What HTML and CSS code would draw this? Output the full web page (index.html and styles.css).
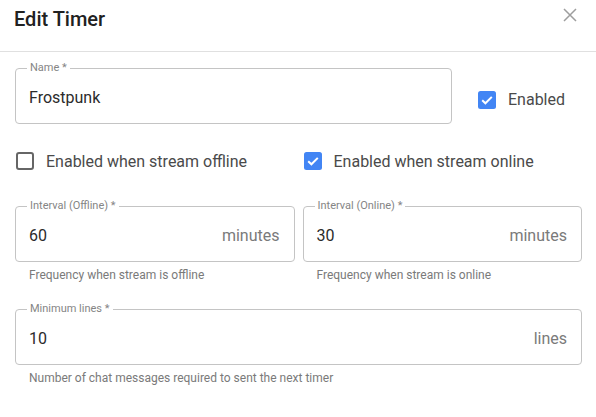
FILE: index.html
```html
<!DOCTYPE html>
<html lang="en">
<head>
<meta charset="utf-8">
<title>Edit Timer</title>
<link rel="stylesheet" href="styles.css">
</head>
<body>
<div class="dialog">
  <header class="dialog-header">
    <h2 class="dialog-title">Edit Timer</h2>
    <button class="close-btn" aria-label="Close">
      <svg width="14" height="14" viewBox="0 0 14 14"><path d="M1 1L13 13M13 1L1 13" stroke="#9e9e9e" stroke-width="1.5" fill="none"/></svg>
    </button>
  </header>
  <div class="dialog-content">
    <div class="name-row">
      <fieldset class="field">
        <legend>Name *</legend>
        <div class="field-body"><span class="value">Frostpunk</span></div>
      </fieldset>
      <label class="check">
        <span class="box">
          <svg width="18" height="18" viewBox="0 0 18 18"><rect x="0" y="0" width="18" height="18" rx="2.5" fill="#4285f4"/><path d="M4.2 9.2L7.4 12.3L13.8 5.9" stroke="#fff" stroke-width="2" fill="none"/></svg>
        </span>
        <span class="check-text">Enabled</span>
      </label>
    </div>

    <div class="two-col check-row">
      <label class="check">
        <span class="box">
          <svg width="18" height="18" viewBox="0 0 18 18"><rect x="1" y="1" width="16" height="16" rx="2" fill="none" stroke="#666" stroke-width="2"/></svg>
        </span>
        <span class="check-text">Enabled when stream offline</span>
      </label>
      <label class="check">
        <span class="box">
          <svg width="18" height="18" viewBox="0 0 18 18"><rect x="0" y="0" width="18" height="18" rx="2.5" fill="#4285f4"/><path d="M4.2 9.2L7.4 12.3L13.8 5.9" stroke="#fff" stroke-width="2" fill="none"/></svg>
        </span>
        <span class="check-text">Enabled when stream online</span>
      </label>
    </div>

    <div class="two-col">
      <div class="control">
        <fieldset class="field">
          <legend>Interval (Offline) *</legend>
          <div class="field-body"><span class="value">60</span><span class="unit">minutes</span></div>
        </fieldset>
        <p class="helper">Frequency when stream is offline</p>
      </div>
      <div class="control">
        <fieldset class="field">
          <legend>Interval (Online) *</legend>
          <div class="field-body"><span class="value">30</span><span class="unit">minutes</span></div>
        </fieldset>
        <p class="helper">Frequency when stream is online</p>
      </div>
    </div>

    <div class="control min-lines">
      <fieldset class="field">
        <legend>Minimum lines *</legend>
        <div class="field-body"><span class="value">10</span><span class="unit">lines</span></div>
      </fieldset>
      <p class="helper">Number of chat messages required to sent the next timer</p>
    </div>
  </div>
</div>
</body>
</html>
```

FILE: styles.css
```css
* { box-sizing: border-box; }

html, body {
  margin: 0;
  padding: 0;
  background: #ffffff;
}

body {
  font-family: Roboto, "Liberation Sans", Arial, sans-serif;
  color: #212121;
}

.dialog {
  width: 596px;
}

.dialog-header {
  display: flex;
  justify-content: space-between;
  align-items: flex-start;
  padding: 7px 19px 20px 14px;
  border-bottom: 1px solid #e0e0e0;
}

.dialog-title {
  margin: 0;
  font-size: 20px;
  line-height: 24px;
  font-weight: 500;
  color: #212121;
}

.close-btn {
  margin: 1px 0 0 0;
  padding: 0;
  border: 0;
  background: none;
  width: 14px;
  height: 14px;
  display: block;
}
.close-btn svg { display: block; }

.dialog-content {
  padding: 10px 14px 0 15px;
}

.field {
  margin: 0;
  padding: 0 14px 3px 13px;
  border: 1px solid #c4c4c4;
  border-radius: 4px;
  min-width: 0;
}

.field legend {
  font-size: 11px;
  line-height: 12px;
  color: #858585;
  padding: 0 3px;
  margin-left: -2px;
}

.field-body {
  height: 46px;
  display: flex;
  align-items: center;
  justify-content: space-between;
  font-size: 16px;
}

.value { color: #2b2b2b; }
.unit { color: #7a7a7a; }

.name-row {
  display: grid;
  grid-template-columns: 1fr 104px;
  column-gap: 26px;
  align-items: end;
}

.name-row .check {
  height: 49px;
}

.check {
  display: flex;
  align-items: center;
  gap: 12px;
  font-size: 16px;
  color: #4a4a4a;
}

.box {
  width: 18px;
  height: 18px;
  display: block;
  flex: none;
}
.box svg { display: block; }

.two-col {
  display: grid;
  grid-template-columns: 1fr 1fr;
  column-gap: 8px;
}

.check-row {
  height: 42px;
  margin: 16px 0 18px 0;
}
.check-row .check {
  padding-left: 1px;
}

.helper {
  margin: 3px 0 0 0;
  padding-left: 14px;
  font-size: 12px;
  line-height: 20px;
  color: #7a7a7a;
}

.min-lines {
  margin-top: 18px;
}
```
